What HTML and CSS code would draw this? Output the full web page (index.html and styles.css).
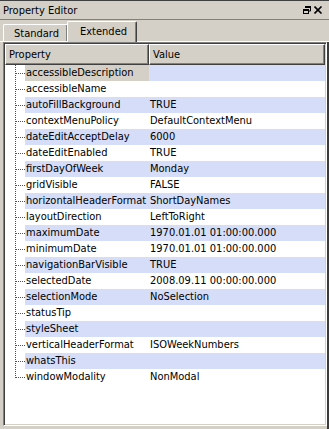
FILE: index.html
```html
<!DOCTYPE html>
<html lang="en">
	<head>
		<meta charset="UTF-8" />
		<meta name="viewport" content="width=device-width, initial-scale=1.0" />
		<title>Property Editor</title>
		<link rel="stylesheet" href="styles.css">
	</head>
	<body>
		<div class="dock">
			<div class="titlebar">
				<span class="title">Property Editor</span>
				<span class="title-btns">
					<svg width="8" height="8" viewBox="0 0 8 8">
						<path d="M2.5 0.5h5v4.5h-2" fill="none" stroke="#000" stroke-width="1" />
						<path d="M2 0h6v2h-6z" fill="#000" />
						<rect x="0.5" y="3.5" width="5" height="4" fill="none" stroke="#000" />
						<path d="M0 3h6v2h-6z" fill="#000" />
					</svg>
					<svg width="9" height="8" viewBox="0 0 9 8">
						<path d="M0.5 0.5l7 7M7.5 0.5l-7 7" stroke="#000" stroke-width="1.6" />
					</svg>
				</span>
			</div>

			<div class="tabbar">
				<div class="tab">Standard</div>
				<div class="tab active">Extended</div>
			</div>

			<div class="pane">
				<div class="tree">
					<div class="header">
						<div class="hsec hprop">Property</div>
						<div class="hsec hval">Value</div>
					</div>
					<div class="rows">
						<div class="row alt current"><div class="branch"></div><div class="name">accessibleDescription</div><div class="value"></div></div>
						<div class="row"><div class="branch"></div><div class="name">accessibleName</div><div class="value"></div></div>
						<div class="row alt"><div class="branch"></div><div class="name">autoFillBackground</div><div class="value">TRUE</div></div>
						<div class="row"><div class="branch"></div><div class="name">contextMenuPolicy</div><div class="value">DefaultContextMenu</div></div>
						<div class="row alt"><div class="branch"></div><div class="name">dateEditAcceptDelay</div><div class="value">6000</div></div>
						<div class="row"><div class="branch"></div><div class="name">dateEditEnabled</div><div class="value">TRUE</div></div>
						<div class="row alt"><div class="branch"></div><div class="name">firstDayOfWeek</div><div class="value">Monday</div></div>
						<div class="row"><div class="branch"></div><div class="name">gridVisible</div><div class="value">FALSE</div></div>
						<div class="row alt"><div class="branch"></div><div class="name">horizontalHeaderFormat</div><div class="value">ShortDayNames</div></div>
						<div class="row"><div class="branch"></div><div class="name">layoutDirection</div><div class="value">LeftToRight</div></div>
						<div class="row alt"><div class="branch"></div><div class="name">maximumDate</div><div class="value">1970.01.01 01:00:00.000</div></div>
						<div class="row"><div class="branch"></div><div class="name">minimumDate</div><div class="value">1970.01.01 01:00:00.000</div></div>
						<div class="row alt"><div class="branch"></div><div class="name">navigationBarVisible</div><div class="value">TRUE</div></div>
						<div class="row"><div class="branch"></div><div class="name">selectedDate</div><div class="value">2008.09.11 00:00:00.000</div></div>
						<div class="row alt"><div class="branch"></div><div class="name">selectionMode</div><div class="value">NoSelection</div></div>
						<div class="row"><div class="branch"></div><div class="name">statusTip</div><div class="value"></div></div>
						<div class="row alt"><div class="branch"></div><div class="name">styleSheet</div><div class="value"></div></div>
						<div class="row"><div class="branch"></div><div class="name">verticalHeaderFormat</div><div class="value">ISOWeekNumbers</div></div>
						<div class="row alt"><div class="branch"></div><div class="name">whatsThis</div><div class="value"></div></div>
						<div class="row last"><div class="branch"></div><div class="name">windowModality</div><div class="value">NonModal</div></div>
					</div>
				</div>
			</div>
		</div>
	</body>
</html>
```

FILE: styles.css
```css
body {
	margin: 0;
	font-family: "DejaVu Sans Condensed", "DejaVu Sans", sans-serif;
	font-size: 11px;
	color: #000;
	background-color: #d4d0c8;
}

.dock {
	width: 329px;
	height: 429px;
	background-color: #d4d0c8;
	border-top: 1px solid #404040;
	box-sizing: border-box;
	display: flex;
	flex-direction: column;
}

.titlebar {
	height: 18px;
	display: flex;
	align-items: center;
	justify-content: space-between;
	padding: 0 6px 0 3px;
	border-bottom: 1px solid #808080;
}

.title {
	padding-top: 1px;
}

.title-btns {
	display: flex;
	gap: 3px;
	align-items: center;
}

.title-btns svg {
	display: block;
}

.tabbar {
	display: flex;
	align-items: flex-end;
	height: 20px;
	padding-left: 3px;
	margin-top: 1px;
}

.tab {
	height: 17px;
	box-sizing: border-box;
	padding: 2px 10px 0 10px;
	border-left: 1px solid #fff;
	border-top: 1px solid #fff;
	border-right: 1px solid #404040;
	box-shadow: inset -1px 0 0 #808080;
	border-radius: 2px 2px 0 0;
	width: 65px;
	line-height: 14px;
}

.tab.active {
	height: 21px;
	width: 70px;
	margin-left: -1px;
	padding-top: 3px;
	padding-left: 12px;
	margin-bottom: -1px;
	background-color: #d4d0c8;
	position: relative;
	z-index: 1;
}

.pane {
	flex: 1;
	display: flex;
	border-top: 1px solid #fff;
	padding-left: 3px;
	padding-bottom: 3px;
}

.tree {
	width: 324px;
	box-sizing: border-box;
	border: 1px solid;
	border-color: #808080 #fff #fff #808080;
	box-shadow: inset 1px 1px 0 #404040, inset -1px -1px 0 #d4d0c8;
	padding: 1px;
	display: flex;
	flex-direction: column;
	background-color: #fff;
}

.pane::after {
	content: "";
	width: 2px;
	margin-top: 0;
	margin-bottom: -3px;
	background-color: #3c3c3c;
}

.header {
	display: flex;
	height: 21px;
}

.hsec {
	box-sizing: border-box;
	background-color: #d4d0c8;
	border-left: 1px solid #fff;
	border-top: 1px solid #fff;
	border-right: 1px solid #404040;
	border-bottom: 1px solid #404040;
	box-shadow: inset -1px -1px 0 #808080;
	padding: 3px 0 0 3px;
	line-height: 14px;
}

.hprop {
	width: 144px;
}

.hval {
	flex: 1;
}

.rows {
	display: flex;
	flex-direction: column;
}

.row {
	display: flex;
	height: 16px;
	line-height: 16px;
}

.branch {
	width: 20px;
	flex: none;
	background:
		repeating-linear-gradient(to bottom, #505050 0 1px, transparent 1px 2px) 10px 0 / 1px 100% no-repeat,
		repeating-linear-gradient(to right, #505050 0 1px, transparent 1px 2px) 11px 8px / 9px 1px no-repeat,
		#fff;
}

.row.last .branch {
	background:
		repeating-linear-gradient(to bottom, #505050 0 1px, transparent 1px 2px) 10px 0 / 1px 9px no-repeat,
		repeating-linear-gradient(to right, #505050 0 1px, transparent 1px 2px) 11px 8px / 9px 1px no-repeat,
		#fff;
}

.name {
	width: 124px;
	flex: none;
	padding-left: 1px;
	box-sizing: border-box;
	white-space: nowrap;
}

.value {
	flex: 1;
	padding-left: 1px;
	white-space: nowrap;
}

.row.alt .name,
.row.alt .value {
	background-color: #d5ddf8;
}

.row.current .name {
	background-color: #d4d0c8;
}
```
